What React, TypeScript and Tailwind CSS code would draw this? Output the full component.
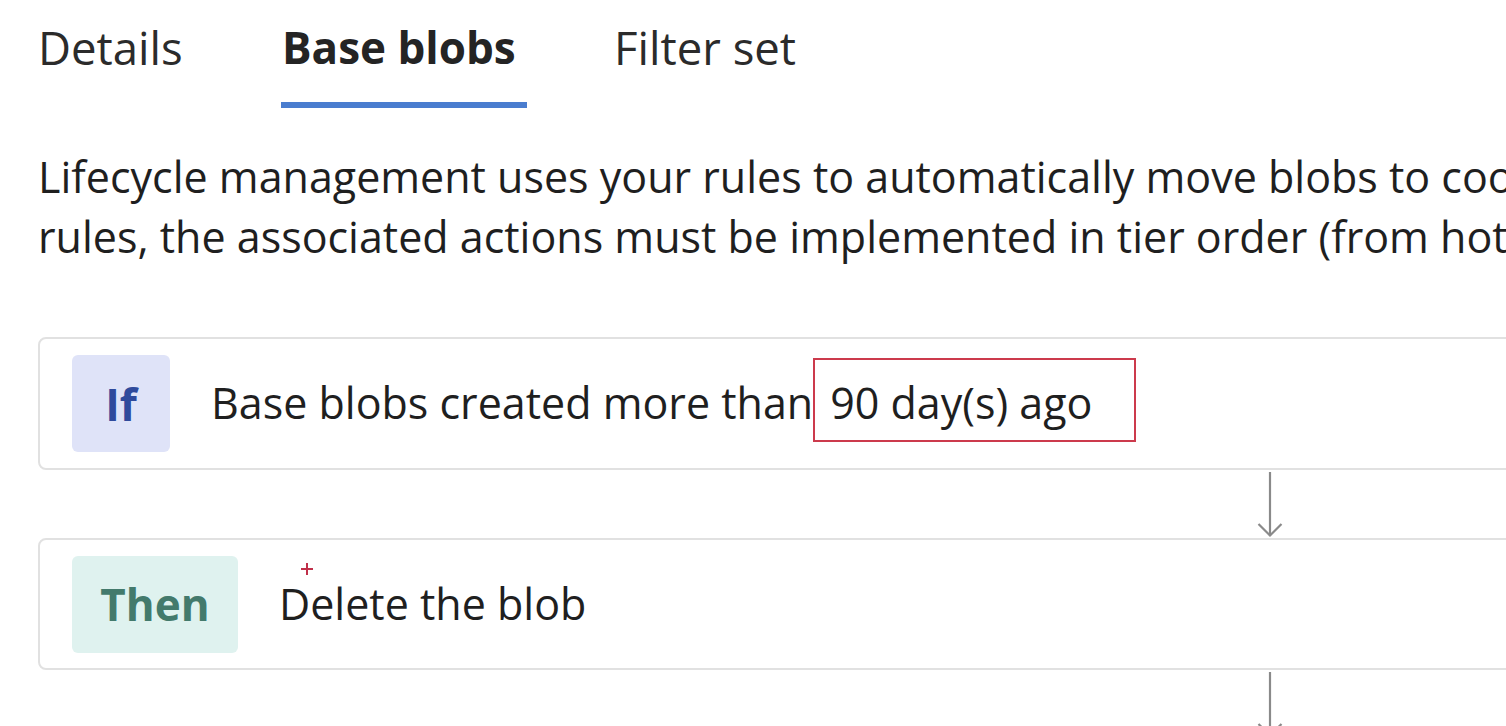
import React from 'react'

const tabs = [
  { label: 'Details', width: 'w-[243px]', active: false },
  { label: 'Base blobs', width: 'w-[333px]', active: true },
  { label: 'Filter set', width: 'w-[300px]', active: false },
]

const Connector = () => (
  <div className="h-[68px] pl-[1219px]">
    <svg width="26" height="68" viewBox="0 0 26 68" fill="none">
      <line x1="13" y1="2" x2="13" y2="66" stroke="#8a8a8a" strokeWidth="2.2" />
      <polyline points="1.5,54 13,65.5 24.5,54" stroke="#8a8a8a" strokeWidth="2.2" fill="none" />
    </svg>
  </div>
)

const App = () => {
  return (
    <div className="w-[1506px] h-[726px] overflow-hidden bg-white text-[#1f1f1f] font-['Open_Sans',sans-serif]">
      <div className="pl-[38px] w-[1700px]">
        {/* tabs */}
        <div className="flex h-[108px]">
          {tabs.map((t) => (
            <div key={t.label} className={`${t.width} flex flex-col h-[108px]`}>
              <div
                className={`pt-[18px] leading-[58px] ${
                  t.active ? 'text-[44px] font-bold text-[#242424] pl-[1px]' : 'text-[45.5px] font-normal text-[#2b2b2b]'
                }`}
              >
                {t.label}
              </div>
              {t.active && <div className="mt-auto h-[6px] w-[246px] bg-[#4a7dcf]" />}
            </div>
          ))}
        </div>

        {/* description */}
        <div className="mt-[39px] text-[43px] leading-[60px] text-[#1f1f1f] whitespace-nowrap">
          <div>Lifecycle management uses your rules to automatically move blobs to cooler tiers or to delete them. If you create multiple</div>
          <div>rules, the associated actions must be implemented in tier order (from hot to cool storage, then archive, then deletion).</div>
        </div>

        {/* If card */}
        <div className="mt-[70px] w-[1600px] h-[133px] border-2 border-[#e1e1e1] rounded-[8px] flex items-center pl-[32px]">
          <div className="w-[98px] h-[97px] rounded-[6px] bg-[#dfe3f8] flex items-center justify-center text-[44px] font-bold text-[#2f4a9c]">
            If
          </div>
          <div className="ml-[41px] flex items-center text-[43px] text-[#1f1f1f] whitespace-nowrap">
            <span>Base blobs created more than</span>
            <span className="inline-flex items-center h-[84px] mb-[8px] pt-[8px] border-2 border-[#cc3a4c] pl-[15px] pr-[42px]">
              90 day(s) ago
            </span>
          </div>
        </div>

        <Connector />

        {/* Then card */}
        <div className="w-[1600px] h-[132px] border-2 border-[#e1e1e1] rounded-[8px] flex items-center pl-[32px]">
          <div className="w-[166px] h-[97px] rounded-[6px] bg-[#dff2ef] flex items-center justify-center text-[44px] font-bold text-[#437a6c]">
            Then
          </div>
          <div className="relative ml-[41px] text-[43px] text-[#1f1f1f] whitespace-nowrap">
            Delete the blob
            <svg className="absolute left-[21px] top-[-10px]" width="14" height="14" viewBox="0 0 14 14">
              <path d="M7 1v12M1 7h12" stroke="#c0304a" strokeWidth="2" />
            </svg>
          </div>
        </div>

        <Connector />
      </div>
    </div>
  )
}

export default App
